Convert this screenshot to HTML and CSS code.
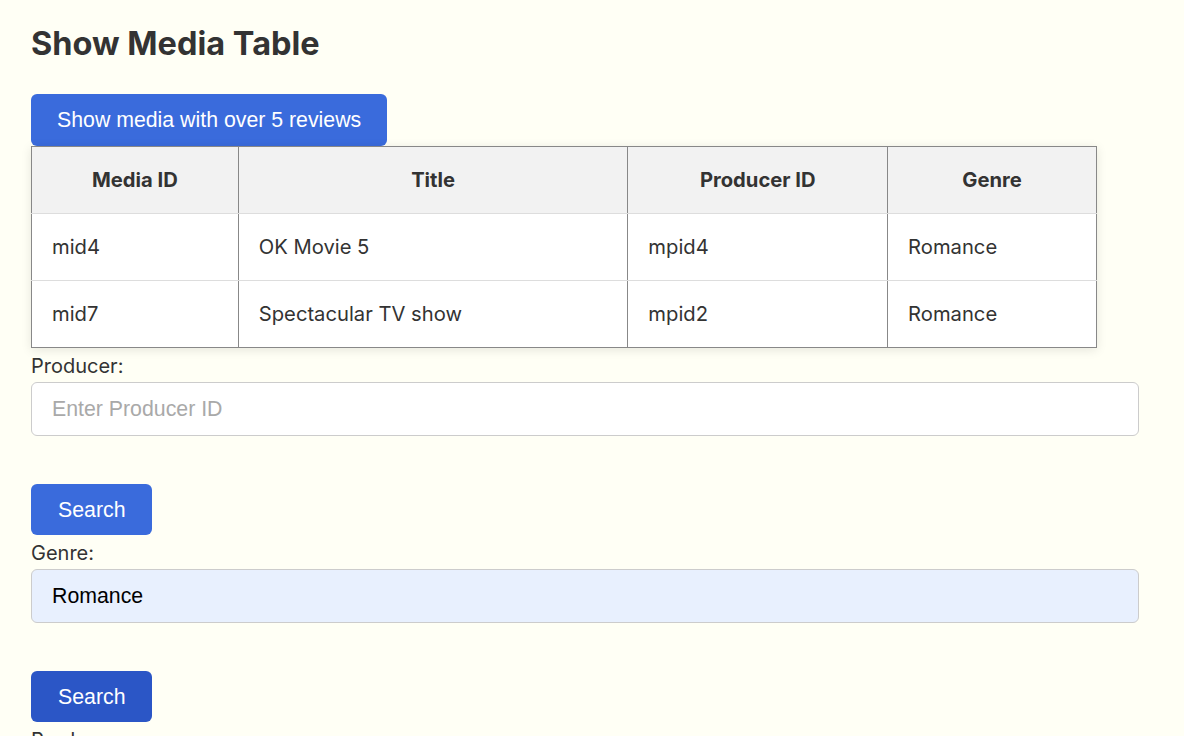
FILE: index.html
```html
<!DOCTYPE html>
<html lang="en">
<head>
<meta charset="utf-8">
<title>Show Media Table</title>
<link rel="stylesheet" href="styles.css">
</head>
<body>
<main class="page">
  <h1 class="title">Show Media Table</h1>
  <button class="btn btn-wide" type="button">Show media with over 5 reviews</button>
  <table class="media-table">
    <colgroup>
      <col class="c1"><col class="c2"><col class="c3"><col class="c4">
    </colgroup>
    <thead>
      <tr><th>Media ID</th><th>Title</th><th>Producer ID</th><th>Genre</th></tr>
    </thead>
    <tbody>
      <tr><td>mid4</td><td>OK Movie 5</td><td>mpid4</td><td>Romance</td></tr>
      <tr><td>mid7</td><td>Spectacular TV show</td><td>mpid2</td><td>Romance</td></tr>
    </tbody>
  </table>
  <form class="search-form">
    <label class="field-label" for="producer">Producer:</label>
    <input class="field" id="producer" type="text" placeholder="Enter Producer ID">
    <button class="btn" type="button">Search</button>
  </form>
  <form class="search-form">
    <label class="field-label" for="genre">Genre:</label>
    <input class="field field-filled" id="genre" type="text" value="Romance">
    <button class="btn btn-active" type="button">Search</button>
  </form>
  <form class="search-form">
    <label class="field-label" for="producer2">Producer:</label>
    <input class="field" id="producer2" type="text" placeholder="Enter Producer ID">
    <button class="btn" type="button">Search</button>
  </form>
</main>
</body>
</html>
```
FILE: styles.css
```css
* { box-sizing: border-box; }
html, body { margin: 0; padding: 0; }
body {
  background: #fffff5;
  color: #333333;
  font-family: Inter, "Liberation Sans", sans-serif;
  font-size: 20px;
}
.page {
  padding: 25px 31px 0 31px;
  display: flex;
  flex-direction: column;
  align-items: flex-start;
}
.title {
  margin: 0 0 31px 0;
  font-size: 32.5px;
  line-height: 38px;
  font-weight: 700;
  color: #333333;
}
.btn {
  font-family: "Liberation Sans", Arial, sans-serif;
  font-size: 21.3px;
  line-height: 24px;
  color: #ffffff;
  background: #3a6bdc;
  border: none;
  border-radius: 6px;
  padding: 14px 27px 13px 27px;
  cursor: pointer;
}
.btn-wide { padding: 14px 26px; }
.btn-active { background: #2b56c6; }
.media-table {
  width: 1066px;
  border-collapse: collapse;
  background: #ffffff;
  box-shadow: 0 2px 10px rgba(0, 0, 0, 0.10);
  border: 1px solid #888888;
}
.c1 { width: 207px; }
.c2 { width: 390px; }
.c3 { width: 260px; }
.c4 { width: 209px; }
.media-table th, .media-table td {
  padding: 20px 20px;
  line-height: 26px;
  font-size: 20.2px;
  border-left: 1px solid #888888;
  border-right: 1px solid #888888;
  border-bottom: 1px solid #dddddd;
  text-align: left;
  color: #333333;
}
.media-table th {
  background: #f2f2f2;
  text-align: center;
  font-weight: 700;
}
.media-table tbody tr:last-child td { border-bottom: 1px solid #888888; }
.search-form {
  display: flex;
  flex-direction: column;
  align-items: flex-start;
  align-self: stretch;
}
.field-label {
  display: block;
  line-height: 24px;
  margin: 6px 0 4px 0;
  font-size: 20px;
  color: #333333;
}
.field {
  width: 1108px;
  height: 54px;
  padding: 0 20px;
  font-family: "Liberation Sans", Arial, sans-serif;
  font-size: 21.3px;
  color: #000000;
  background: #ffffff;
  border: 1px solid #cccccc;
  border-radius: 6px;
  margin: 0 0 48px 0;
  outline: none;
}
.field::placeholder { color: #a9a9a9; }
.field-filled { background: #e8f0fe; }
```
